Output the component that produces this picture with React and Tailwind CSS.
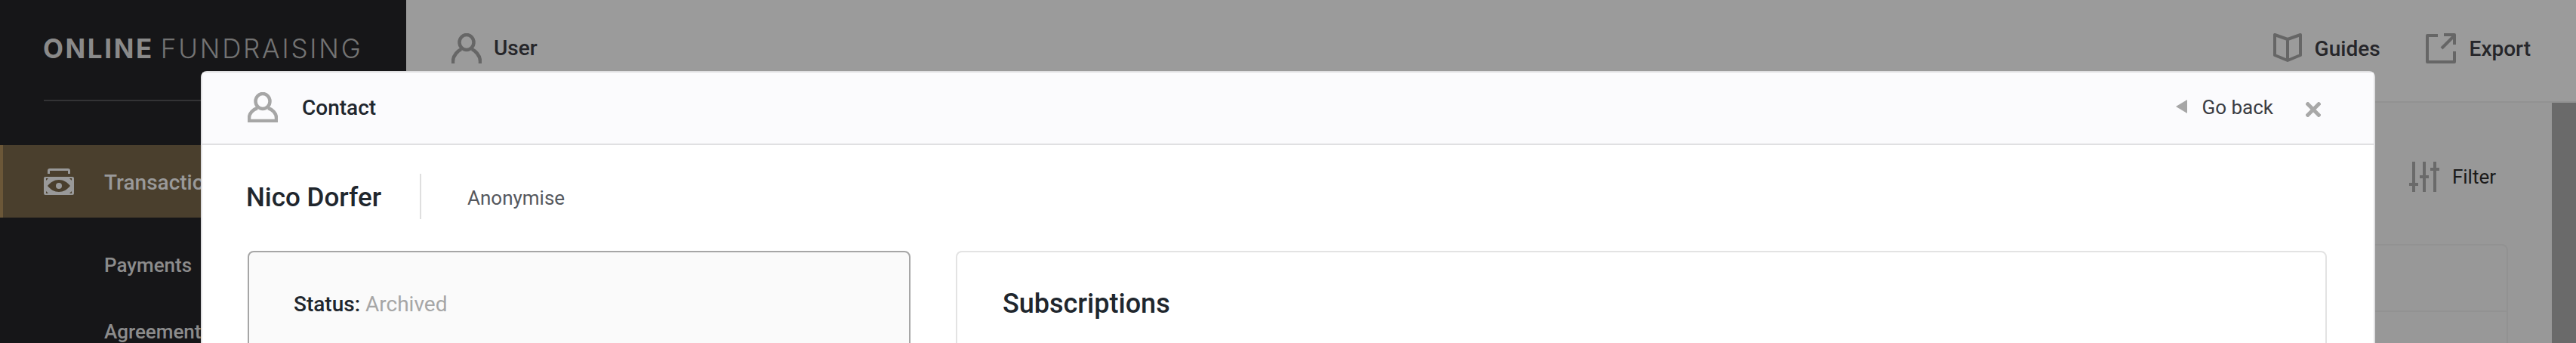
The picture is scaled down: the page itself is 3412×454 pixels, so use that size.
const roboto = { fontFamily: "Roboto, sans-serif" };

function UserOpen({ className }) {
  return (
    <svg className={className} viewBox="0 0 40 40" fill="none" stroke="currentColor" strokeWidth="4.5">
      <ellipse cx="20" cy="12" rx="9.5" ry="10" />
      <path d="M2 40v-3c0-8 7-14 11-16M38 40v-3c0-8-7-14-11-16" />
    </svg>
  );
}

function UserClosed({ className }) {
  return (
    <svg className={className} viewBox="0 0 40 40" fill="none" stroke="currentColor" strokeWidth="4.5">
      <ellipse cx="20" cy="12" rx="9.5" ry="10" />
      <path d="M13 21C7 23 2 28 2 34v4h36v-4c0-6-5-11-11-13" />
    </svg>
  );
}

function Money({ className }) {
  return (
    <svg className={className} viewBox="0 0 40 36" fill="currentColor">
      <path d="M5 8V4a3 3 0 0 1 3-3h24a3 3 0 0 1 3 3v4h-3V4H8v4z" />
      <path
        fillRule="evenodd"
        d="M2 12h36a2 2 0 0 1 2 2v20a2 2 0 0 1-2 2H2a2 2 0 0 1-2-2V14a2 2 0 0 1 2-2zM5 24c4-5 9-8 15-8s11 3 15 8c-4 5-9 8-15 8s-11-3-15-8zM3 14v3l3-3zM37 14h-3l3 3zM3 34h3l-3-3zM37 34v-3l-3 3z"
      />
      <circle cx="20" cy="24" r="4" />
    </svg>
  );
}

function Book({ className }) {
  return (
    <svg className={className} viewBox="0 0 40 38" fill="none" stroke="currentColor" strokeWidth="4" strokeLinejoin="round">
      <path d="M20 8 3 2v27l17 7 17-7V2zM20 8v28" />
    </svg>
  );
}

function ExportIcon({ className }) {
  return (
    <svg className={className} viewBox="0 0 40 40" fill="none" stroke="currentColor" strokeWidth="4" strokeLinejoin="round">
      <path d="M16 3H2v35h36V24M21 20 37 4M24 2h14v13" />
    </svg>
  );
}

function Sliders({ className }) {
  return (
    <svg className={className} viewBox="0 0 40 40" fill="none" stroke="currentColor" strokeWidth="4">
      <path d="M6 0v40M0 30h12M20 0v40M14 20h12M34 0v40M28 10h12" />
    </svg>
  );
}

export default function App() {
  return (
    <div className="relative flex h-[454px] w-[3412px] overflow-hidden bg-[#999999]" style={roboto}>
      <aside className="w-[538px] shrink-0 bg-[#161618]">
        <div className="mx-[58px] flex h-[134px] items-start border-b-2 border-[#333335] pt-[39px] text-[35px] leading-[50px]" style={{ fontFamily: "Inter, sans-serif" }}>
          <span className="mr-[9px] -ml-[1px] font-bold tracking-[2.6px] text-[#8a8a8a]">ONLINE</span>
          <span className="font-light tracking-[2.8px] text-[#737373]">FUNDRAISING</span>
        </div>
        <div className="mt-[58px] flex h-[96px] items-center border-l-4 border-[#6b5738] bg-[#4a3f2d] pl-[54px] text-[28px] font-medium text-[#999999]">
          <Money className="mr-[40px] h-[36px] w-[40px]" />
          <span className="translate-y-[2px]">Transactions</span>
        </div>
        <div className="mt-[43px] pl-[138px] text-[26px] font-medium leading-[40px] text-[#8c8c8c]">Payments</div>
        <div className="mt-[48px] pl-[138px] text-[26px] font-medium leading-[40px] text-[#8c8c8c]">Agreements</div>
      </aside>

      <main className="flex min-w-0 flex-1 flex-col">
        <header className="flex h-[136px] shrink-0 items-start border-b-2 border-[#929292] bg-[#9b9b9b] pl-[60px] pt-[44px] pr-[60px] text-[28px] font-medium text-[#26262a]">
          <UserOpen className="h-[40px] w-[40px] text-[#666666]" />
          <span className="ml-[16px] leading-[40px]">User</span>
          <div className="ml-auto flex items-start">
            <Book className="h-[38px] w-[40px] text-[#666666]" />
            <span className="ml-[16px] leading-[42px]">Guides</span>
            <ExportIcon className="ml-[60px] h-[40px] w-[40px] text-[#666666]" />
            <span className="ml-[18px] leading-[42px]">Export</span>
          </div>
        </header>
        <div className="flex min-h-0 flex-1">
          <div className="flex-1 bg-[#989898]">
            <div className="flex items-center justify-end pt-[78px] pr-[74px] text-[26px] text-[#1a1a1a]">
              <Sliders className="h-[40px] w-[40px] text-[#6a6a6a]" />
              <span className="ml-[17px] leading-[40px]">Filter</span>
            </div>
            <div className="ml-[100px] mr-[58px] mt-[69px] h-[200px] rounded-t-lg border-2 border-[#929292]">
              <div className="h-[88px] border-b-2 border-[#929292]" />
            </div>
          </div>
          <div className="w-[32px] shrink-0 bg-[#6a6a6a]" />
        </div>
      </main>

      <section className="absolute left-[266px] top-[94px] h-[500px] w-[2880px] rounded-t-lg border-2 border-[#e0e0e2] bg-white">
        <div className="flex h-[96px] items-center border-b-2 border-[#e0e0e2] bg-[#fbfbfd] pl-[60px] pr-[70px]">
          <UserClosed className="h-[40px] w-[40px] -translate-y-px text-[#a6a6a6]" />
          <span className="ml-[32px] text-[28px] font-medium text-[#20262d]">Contact</span>
          <div className="ml-auto flex items-center">
            <div className="mr-[19px] h-0 w-0 -translate-y-[2px] border-y-[9px] border-r-[15px] border-y-transparent border-r-[#a6a6a6]" />
            <span className="-translate-y-[1px] text-[26px] text-[#3a3c42]">Go back</span>
            <svg className="ml-[43px] h-[20px] w-[20px] translate-y-[2px] text-[#a8a8a8]" viewBox="0 0 20 20" stroke="currentColor" strokeWidth="5" fill="none">
              <path d="M1 1 19 19M19 1 1 19" />
            </svg>
          </div>
        </div>
        <div className="flex h-[140px] items-center pl-[58px]">
          <h1 className="text-[35px] font-medium text-[#20262d]">Nico Dorfer</h1>
          <div className="ml-[51px] h-[60px] w-[2px] -translate-y-[2px] bg-[#dfdfdf]" />
          <span className="ml-[61px] text-[26px] text-[#55585e]">Anonymise</span>
        </div>
        <div className="flex pl-[60px] pr-[62px]">
          <div className="h-[300px] w-[878px] rounded-lg border-2 border-[#a6a6a6] bg-[#fafafa] pl-[59px] pt-[49px] text-[28px] leading-[40px]">
            <span className="font-medium text-[#20262d]">Status: </span>
            <span className="text-[#a6a6a6]">Archived</span>
          </div>
          <div className="ml-[60px] h-[300px] flex-1 rounded-lg border-2 border-[#e3e3e3] bg-white pl-[60px] pt-[43px]">
            <h2 className="text-[36px] font-medium leading-[50px] text-[#20262d]">Subscriptions</h2>
          </div>
        </div>
      </section>
    </div>
  );
}
